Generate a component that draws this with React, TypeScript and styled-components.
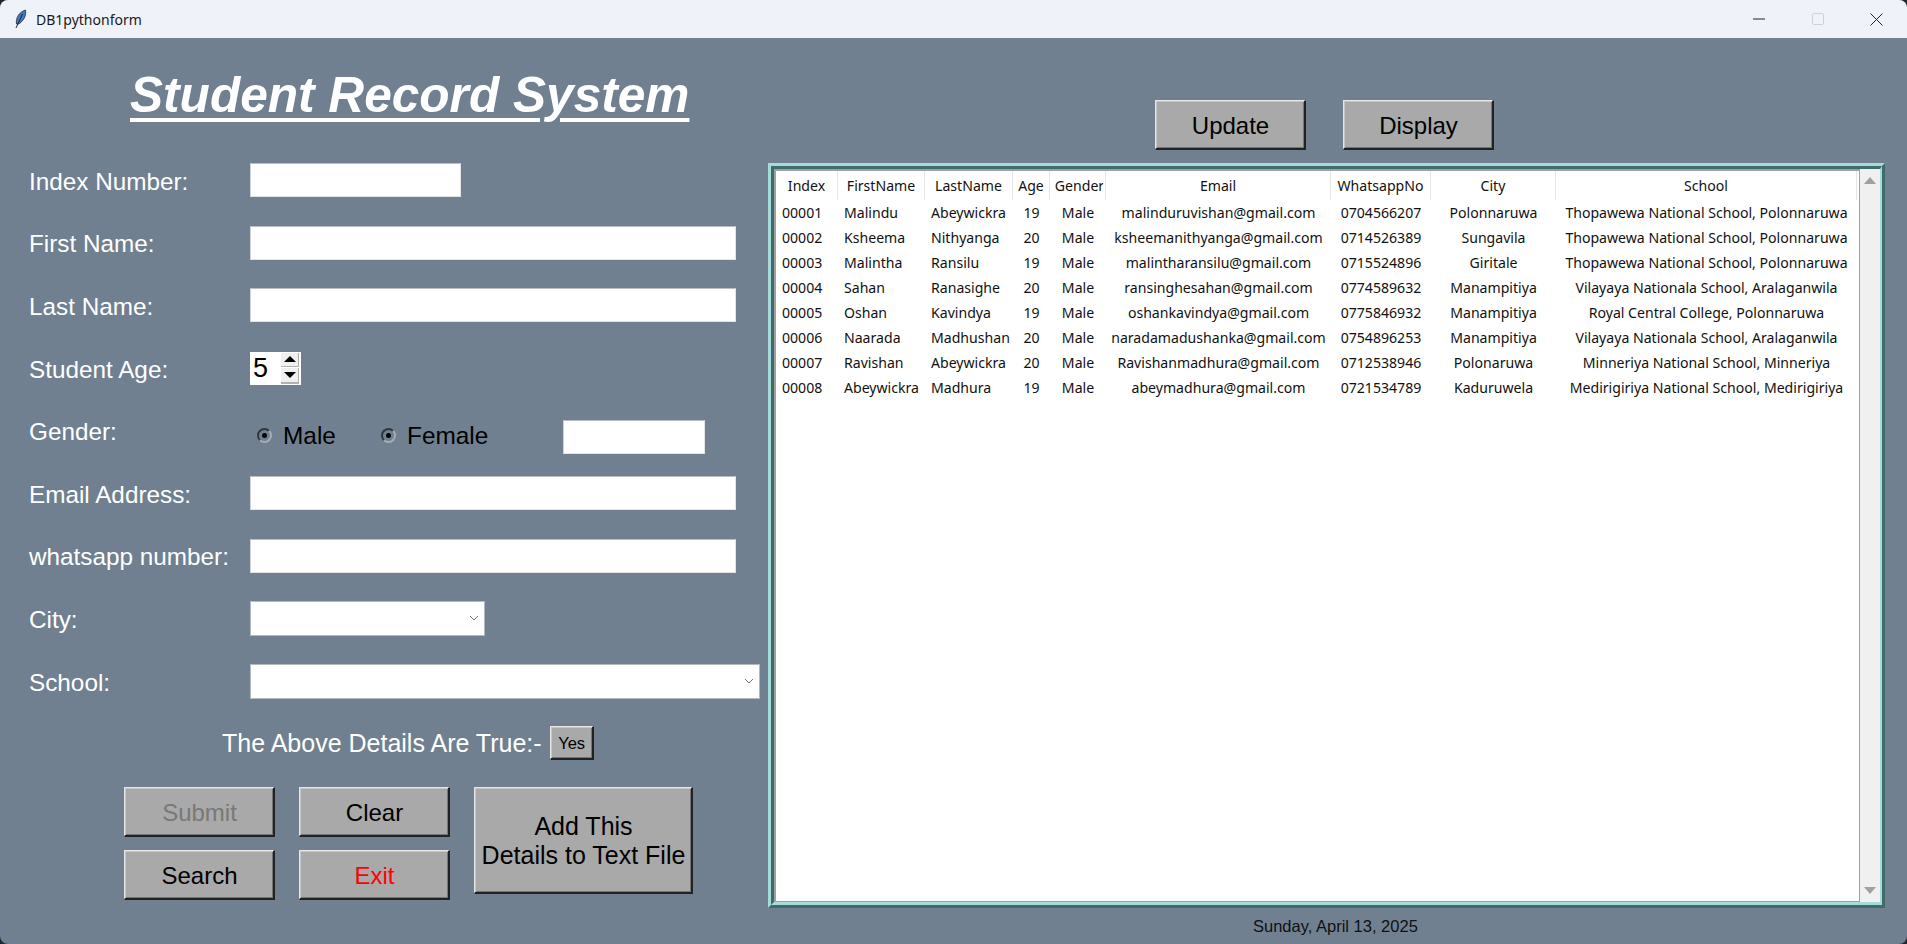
import React from 'react';
import styled, { createGlobalStyle } from 'styled-components';

const GlobalStyle = createGlobalStyle`
  html, body {
    margin: 0;
    padding: 0;
    background: #20262b;
    overflow: hidden;
  }
`;

const Window = styled.div`
  width: 1907px;
  height: 944px;
  display: flex;
  flex-direction: column;
  border-radius: 8px;
  overflow: hidden;
  background: #708090;
  font-family: "Liberation Sans", Arial, sans-serif;
`;

const TitleBar = styled.div`
  height: 38px;
  flex: none;
  display: flex;
  align-items: center;
  background: #eff2f9;
  padding: 0 1px 0 15px;
  font-family: "Noto Sans", sans-serif;
  font-size: 14px;
  color: #1a1a1a;
`;

const AppName = styled.span`
  margin-left: 9px;
  flex: 1;
`;

const WinButton = styled.div`
  width: 59px;
  height: 38px;
  display: flex;
  align-items: center;
  justify-content: center;
`;

const Body = styled.div`
  flex: 1;
  display: flex;
`;

const LeftPanel = styled.div`
  width: 768px;
  flex: none;
`;

const Title = styled.h1`
  margin: 0;
  height: 111px;
  box-sizing: border-box;
  padding: 29px 0 0 130px;
  font-size: 49.6px;
  line-height: 56px;
  font-weight: bold;
  font-style: italic;
  color: #fff;
  text-decoration: underline;
  text-decoration-thickness: 4px;
  text-underline-offset: 6px;
`;

const Row = styled.div<{ $shift?: boolean }>`
  height: 62.6px;
  box-sizing: border-box;
  display: flex;
  align-items: center;
  padding-left: 29px;
  padding-top: ${p => (p.$shift ? 12 : 0)}px;
`;

const Label = styled.div<{ $lift?: boolean }>`
  width: 221px;
  flex: none;
  font-size: 24.3px;
  color: #fff;
  padding-top: ${p => (p.$lift ? 0 : 3)}px;
  padding-bottom: ${p => (p.$lift ? 10 : 0)}px;
  white-space: nowrap;
`;

const Entry = styled.div<{ $w: number }>`
  width: ${p => p.$w}px;
  height: 34px;
  box-sizing: border-box;
  background: #fff;
  border: 1px solid #e4e4e4;
  border-top-color: #b9bcc0;
  border-left-color: #d0d2d4;
`;

const Spin = styled.div`
  width: 51px;
  height: 33px;
  box-sizing: border-box;
  background: #fff;
  display: flex;
  align-items: center;
  justify-content: space-between;
  padding: 1px 2px 1px 3px;
  font-size: 27px;
  color: #000;
`;

const SpinButtons = styled.div`
  width: 18px;
  height: 100%;
  display: flex;
  flex-direction: column;
  gap: 1px;
`;

const SpinButton = styled.div<{ $down?: boolean }>`
  flex: 1;
  display: flex;
  align-items: center;
  justify-content: center;
  background: #f0f0f0;
  border-bottom: ${p => (p.$down ? '2px solid #b0b0b0' : '1px solid #b0b0b0')};
  border-right: 1px solid #b0b0b0;
  &::after {
    content: '';
    border-left: 6px solid transparent;
    border-right: 6px solid transparent;
    ${p => (p.$down ? 'border-top: 6px solid #000;' : 'border-bottom: 6px solid #000;')}
  }
`;

const GenderGroup = styled.div`
  display: flex;
  align-items: center;
  padding-left: 7px;
`;

const Radio = styled.span`
  width: 15px;
  height: 15px;
  box-sizing: border-box;
  border-radius: 50%;
  border: 2px solid #30363c;
  border-right-color: #a4adb8;
  border-bottom-color: #a4adb8;
  display: flex;
  align-items: center;
  justify-content: center;
  margin-bottom: 2px;
  &::after {
    content: '';
    width: 5px;
    height: 5px;
    border-radius: 50%;
    background: #000;
  }
`;

const RadioText = styled.span<{ $w: number }>`
  width: ${p => p.$w}px;
  margin: 0 0 2px 11px;
  font-size: 24.4px;
  color: #000;
`;

const Combo = styled(Entry)`
  height: 35px;
  border: 1px solid #b4b8bc;
  display: flex;
  align-items: center;
  justify-content: flex-end;
  padding-right: 4px;
`;

const ConfirmRow = styled.div`
  display: flex;
  align-items: center;
  height: 34px;
  margin-top: 14px;
  padding-left: 222px;
  gap: 8px;
  color: #fff;
  font-size: 25px;
`;

const ActionGrid = styled.div`
  display: grid;
  grid-template-columns: 151px 151px 219px;
  grid-template-rows: 50px 50px;
  column-gap: 24px;
  row-gap: 13px;
  margin-top: 27px;
  padding-left: 124px;
`;

const Button = styled.button<{ $color?: string; $tall?: boolean }>`
  box-sizing: border-box;
  padding: 1px 0 0 1px;
  background: #a9a9a9;
  border-style: solid;
  border-width: 1px 2px 2px 1px;
  border-color: #e6e6e6 #222 #222 #e6e6e6;
  box-shadow: inset 1px 1px 0 #c6c6c6, inset -1px -1px 0 #757575;
  color: ${p => p.$color || '#000'};
  font-family: "Liberation Sans", Arial, sans-serif;
  font-size: ${p => (p.$tall ? 25 : 24)}px;
  line-height: 29px;
  ${p => p.$tall && 'grid-row: span 2; height: 107px;'}
`;

const YesButton = styled(Button)`
  width: 44px;
  height: 34px;
  font-size: 16.5px;
`;

const RightPanel = styled.div`
  flex: 1;
  display: flex;
  flex-direction: column;
`;

const TopButtons = styled.div`
  display: flex;
  gap: 37px;
  padding: 62px 0 0 387px;
  height: 50px;
`;

const WideButton = styled(Button)`
  width: 151px;
  height: 50px;
`;

const FrameOuter = styled.div`
  width: 1117px;
  height: 745px;
  margin-top: 13px;
  box-sizing: border-box;
  border: 3px solid;
  border-color: #a5dcd9 #3f6b6b #3f6b6b #a5dcd9;
`;

const FrameInner = styled.div`
  height: 100%;
  box-sizing: border-box;
  border-style: solid;
  border-width: 3px 2px 3px 3px;
  border-color: #3f6b6b #a5dcd9 #a5dcd9 #3f6b6b;
  display: flex;
  background: #fff;
`;

const Tree = styled.div`
  width: 1083px;
  flex: none;
  border-top: 2px solid #a0a0a0;
  border-left: 2px solid #a0a0a0;
  border-bottom: 1px solid #a0a0a0;
`;

const columns = '62px 87px 88px 37px 56px 225px 100px 125px 301px';

const HeaderRow = styled.div`
  display: grid;
  grid-template-columns: ${columns};
  height: 29px;
`;

const HeaderCell = styled.div<{ $clip?: boolean }>`
  display: flex;
  align-items: center;
  justify-content: center;
  overflow: hidden;
  white-space: nowrap;
  font-family: "Noto Sans", sans-serif;
  font-size: 14.1px;
  color: #111;
  border-right: 1px solid #e5e5e5;
  padding-left: ${p => (p.$clip ? 4 : 0)}px;
  & > span {
    ${p => p.$clip && 'clip-path: inset(0 1px 0 0);'}
  }
`;

const DataRow = styled.div`
  display: grid;
  grid-template-columns: ${columns};
  height: 25px;
`;

const DataCell = styled.div<{ $left?: boolean }>`
  display: flex;
  align-items: center;
  justify-content: ${p => (p.$left ? 'flex-start' : 'center')};
  padding-left: ${p => (p.$left ? 6 : 0)}px;
  overflow: hidden;
  white-space: nowrap;
  font-family: "Noto Sans", sans-serif;
  font-size: 14.1px;
  color: #111;
`;

const ScrollBar = styled.div`
  flex: 1;
  background: #f0f0f0;
  border-left: 1px solid #a0a0a0;
  display: flex;
  flex-direction: column;
  justify-content: space-between;
  align-items: center;
  padding: 8px 0;
`;

const ScrollArrow = styled.span<{ $down?: boolean }>`
  border-left: 6px solid transparent;
  border-right: 6px solid transparent;
  ${p => (p.$down ? 'border-top: 7px solid #a0a0a0;' : 'border-bottom: 7px solid #a0a0a0;')}
`;

const DateText = styled.div`
  padding: 9px 0 0 485px;
  font-size: 16.5px;
  color: #111;
`;

const headers = ['Index', 'FirstName', 'LastName', 'Age', 'Gender', 'Email', 'WhatsappNo', 'City', 'School'];

const rows = [
  ['00001', 'Malindu', 'Abeywickra', '19', 'Male', 'malinduruvishan@gmail.com', '0704566207', 'Polonnaruwa', 'Thopawewa National School, Polonnaruwa'],
  ['00002', 'Ksheema', 'Nithyanga', '20', 'Male', 'ksheemanithyanga@gmail.com', '0714526389', 'Sungavila', 'Thopawewa National School, Polonnaruwa'],
  ['00003', 'Malintha', 'Ransilu', '19', 'Male', 'malintharansilu@gmail.com', '0715524896', 'Giritale', 'Thopawewa National School, Polonnaruwa'],
  ['00004', 'Sahan', 'Ranasighe', '20', 'Male', 'ransinghesahan@gmail.com', '0774589632', 'Manampitiya', 'Vilayaya Nationala School, Aralaganwila'],
  ['00005', 'Oshan', 'Kavindya', '19', 'Male', 'oshankavindya@gmail.com', '0775846932', 'Manampitiya', 'Royal Central College, Polonnaruwa'],
  ['00006', 'Naarada', 'Madhushan', '20', 'Male', 'naradamadushanka@gmail.com', '0754896253', 'Manampitiya', 'Vilayaya Nationala School, Aralaganwila'],
  ['00007', 'Ravishan', 'Abeywickra', '20', 'Male', 'Ravishanmadhura@gmail.com', '0712538946', 'Polonaruwa', 'Minneriya National School, Minneriya'],
  ['00008', 'Abeywickra', 'Madhura', '19', 'Male', 'abeymadhura@gmail.com', '0721534789', 'Kaduruwela', 'Medirigiriya National School, Medirigiriya'],
];

const Feather = () => (
  <svg width="12" height="20" viewBox="0 0 12 20">
    <path d="M1.5 15 C0.5 9 4 3 10.5 1 C11.5 6 9 12 3.5 15 Z" fill="#3f78c4" stroke="#26303c" strokeWidth="0.8" />
    <path d="M1 19 L7.5 5" stroke="#1d2530" strokeWidth="1" fill="none" />
  </svg>
);

const Chevron = () => (
  <svg width="12" height="8" viewBox="0 0 12 8">
    <path d="M2 2 L6 6 L10 2" stroke="#777" strokeWidth="1" fill="none" />
  </svg>
);

export default function App() {
  return (
    <Window>
      <GlobalStyle />
      <TitleBar>
        <Feather />
        <AppName>DB1pythonform</AppName>
        <WinButton>
          <svg width="12" height="2" viewBox="0 0 12 2"><path d="M0 1 H12" stroke="#222" strokeWidth="1" /></svg>
        </WinButton>
        <WinButton>
          <svg width="12" height="12" viewBox="0 0 12 12"><rect x="0.5" y="0.5" width="11" height="11" rx="1.5" fill="none" stroke="#cfd1d6" /></svg>
        </WinButton>
        <WinButton>
          <svg width="13" height="13" viewBox="0 0 13 13"><path d="M0.5 0.5 L12.5 12.5 M12.5 0.5 L0.5 12.5" stroke="#222" strokeWidth="1" /></svg>
        </WinButton>
      </TitleBar>
      <Body>
        <LeftPanel>
          <Title>Student Record System</Title>
          <Row><Label>Index Number:</Label><Entry $w={211} /></Row>
          <Row><Label>First Name:</Label><Entry $w={486} /></Row>
          <Row><Label>Last Name:</Label><Entry $w={486} /></Row>
          <Row>
            <Label>Student Age:</Label>
            <Spin>
              5
              <SpinButtons><SpinButton /><SpinButton $down /></SpinButtons>
            </Spin>
          </Row>
          <Row $shift>
            <Label $lift>Gender:</Label>
            <GenderGroup>
              <Radio /><RadioText $w={98}>Male</RadioText>
              <Radio /><RadioText $w={156}>Female</RadioText>
              <Entry $w={142} />
            </GenderGroup>
          </Row>
          <Row><Label>Email Address:</Label><Entry $w={486} /></Row>
          <Row><Label>whatsapp number:</Label><Entry $w={486} /></Row>
          <Row><Label>City:</Label><Combo $w={235}><Chevron /></Combo></Row>
          <Row><Label>School:</Label><Combo $w={510}><Chevron /></Combo></Row>
          <ConfirmRow>
            The Above Details Are True:-
            <YesButton>Yes</YesButton>
          </ConfirmRow>
          <ActionGrid>
            <Button $color="#787878">Submit</Button>
            <Button>Clear</Button>
            <Button $tall>Add This<br />Details to Text File</Button>
            <Button>Search</Button>
            <Button $color="#f00">Exit</Button>
          </ActionGrid>
        </LeftPanel>
        <RightPanel>
          <TopButtons>
            <WideButton>Update</WideButton>
            <WideButton>Display</WideButton>
          </TopButtons>
          <FrameOuter>
            <FrameInner>
              <Tree>
                <HeaderRow>
                  {headers.map(h => <HeaderCell key={h} $clip={h === 'Gender'}><span>{h}</span></HeaderCell>)}
                </HeaderRow>
                {rows.map(row => (
                  <DataRow key={row[0]}>
                    {row.map((cell, i) => <DataCell key={i} $left={i < 3}>{cell}</DataCell>)}
                  </DataRow>
                ))}
              </Tree>
              <ScrollBar><ScrollArrow /><ScrollArrow $down /></ScrollBar>
            </FrameInner>
          </FrameOuter>
          <DateText>Sunday, April 13, 2025</DateText>
        </RightPanel>
      </Body>
    </Window>
  );
}
